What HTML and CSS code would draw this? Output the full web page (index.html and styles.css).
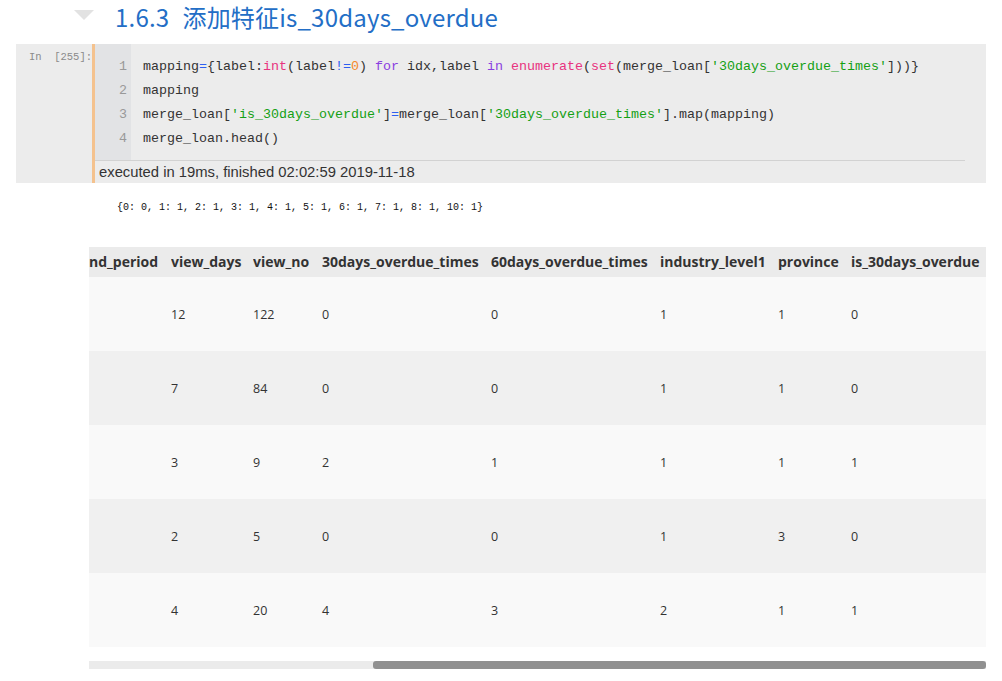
FILE: index.html
```html
<!DOCTYPE html>
<html lang="zh">
<head>
<meta charset="utf-8">
<title>1.6.3 添加特征is_30days_overdue</title>
<link rel="stylesheet" href="styles.css">
</head>
<body>
<div class="page">
  <h2 class="heading"><span class="toggle"></span><span class="htext"><span class="hnum">1.6.3&nbsp;&nbsp;</span><span class="hname">添加特征is_30days_overdue</span></span></h2>

  <div class="cell">
    <div class="prompt">In&nbsp;&nbsp;[255]:</div>
    <div class="inner">
      <div class="editor">
        <div class="gutter"><div>1</div><div>2</div><div>3</div><div>4</div></div>
        <div class="code">
          <div class="ln">mapping<span class="op">=</span>{label:<span class="bi">int</span>(label<span class="op">!=</span><span class="nm">0</span>) <span class="kw">for</span> idx,label <span class="kw">in</span> <span class="bi">enumerate</span>(<span class="bi">set</span>(merge_loan[<span class="st">'30days_overdue_times'</span>]))}</div>
          <div class="ln">mapping</div>
          <div class="ln">merge_loan[<span class="st">'is_30days_overdue'</span>]<span class="op">=</span>merge_loan[<span class="st">'30days_overdue_times'</span>].map(mapping)</div>
          <div class="ln">merge_loan.head()</div>
        </div>
      </div>
      <div class="exec">executed in 19ms, finished 02:02:59 2019-11-18</div>
    </div>
  </div>

  <div class="output">
    <pre class="stream">{0: 0, 1: 1, 2: 1, 3: 1, 4: 1, 5: 1, 6: 1, 7: 1, 8: 1, 10: 1}</pre>
    <div class="table-wrap">
      <table class="df">
        <colgroup>
          <col class="c1"><col class="c2"><col class="c3"><col class="c4"><col class="c5"><col class="c6"><col class="c7"><col class="c8">
        </colgroup>
        <thead>
          <tr><th>nd_period</th><th>view_days</th><th>view_no</th><th>30days_overdue_times</th><th>60days_overdue_times</th><th>industry_level1</th><th>province</th><th>is_30days_overdue</th></tr>
        </thead>
        <tbody>
          <tr><td></td><td>12</td><td>122</td><td>0</td><td>0</td><td>1</td><td>1</td><td>0</td></tr>
          <tr><td></td><td>7</td><td>84</td><td>0</td><td>0</td><td>1</td><td>1</td><td>0</td></tr>
          <tr><td></td><td>3</td><td>9</td><td>2</td><td>1</td><td>1</td><td>1</td><td>1</td></tr>
          <tr><td></td><td>2</td><td>5</td><td>0</td><td>0</td><td>1</td><td>3</td><td>0</td></tr>
          <tr><td></td><td>4</td><td>20</td><td>4</td><td>3</td><td>2</td><td>1</td><td>1</td></tr>
        </tbody>
      </table>
    </div>
    <div class="scrollbar"><div class="thumb"></div></div>
  </div>
</div>
</body>
</html>
```

FILE: styles.css
```css
html, body {
  margin: 0;
  padding: 0;
  background: #ffffff;
}

.page {
  width: 1002px;
  height: 681px;
  overflow: hidden;
  color: #333333;
}

.heading {
  margin: 0;
  height: 44px;
  display: flex;
  align-items: flex-start;
  font-family: "Noto Sans CJK SC", "Noto Sans", sans-serif;
  font-weight: normal;
  font-size: 24px;
  color: #236ec6;
}

.toggle {
  width: 0;
  height: 0;
  margin: 10px 21px 0 74px;
  border-left: 10px solid transparent;
  border-right: 10px solid transparent;
  border-top: 10px solid #e2e2e2;
}

.htext {
  line-height: 34px;
  letter-spacing: 0.2px;
}

.hname {
  padding-left: 2px;
}

.cell {
  margin-left: 16px;
  width: 970px;
  height: 139px;
  background: #ececec;
  display: flex;
}

.prompt {
  width: 76px;
  flex: none;
  box-sizing: border-box;
  padding-top: 7px;
  text-align: right;
  font-family: "Liberation Mono", monospace;
  font-size: 10.5px;
  color: #8a8a8a;
  white-space: nowrap;
}

.inner {
  flex: 1;
  border-left: 3px solid #f4c28e;
  display: flex;
  flex-direction: column;
}

.editor {
  display: flex;
  height: 117px;
  margin-right: 21px;
  border-bottom: 1px solid #d2d2d2;
  box-sizing: border-box;
}

.gutter {
  width: 36px;
  flex: none;
  background: #e2e3e5;
  box-sizing: border-box;
  padding: 11px 4px 0 0;
  text-align: right;
  font-family: "Liberation Mono", monospace;
  font-size: 13.33px;
  line-height: 24px;
  color: #999999;
}

.code {
  flex: 1;
  padding: 11px 0 0 12px;
  font-family: "Liberation Mono", monospace;
  font-size: 13.33px;
  line-height: 24px;
  color: #333333;
}

.ln {
  white-space: pre;
  height: 24px;
}

.op { color: #2e5ff0; }
.bi { color: #e8337e; }
.nm { color: #f48a2a; }
.kw { color: #8a3fe0; }
.st { color: #14a014; }

.exec {
  padding-left: 4px;
  height: 22px;
  line-height: 23px;
  font-family: "Liberation Sans", Arial, sans-serif;
  font-size: 14.8px;
  color: #333333;
}

.output {
  padding-left: 89px;
  padding-top: 18px;
}

.stream {
  margin: 0 0 0 28px;
  height: 46px;
  font-family: "Liberation Mono", monospace;
  font-size: 10px;
  line-height: 13px;
  color: #111111;
}

.table-wrap {
  width: 897px;
  overflow: hidden;
}

.df {
  table-layout: fixed;
  width: 897px;
  border-collapse: collapse;
  border-spacing: 0;
  font-family: "Open Sans", "Noto Sans", sans-serif;
  color: #333333;
}

.c1 { width: 82px; }
.c2 { width: 82px; }
.c3 { width: 69px; }
.c4 { width: 169px; }
.c5 { width: 169px; }
.c6 { width: 118px; }
.c7 { width: 73px; }
.c8 { width: 135px; }

.df th {
  height: 30px;
  padding: 0;
  text-align: left;
  font-size: 14px;
  line-height: 28px;
  font-weight: bold;
  white-space: nowrap;
  overflow: hidden;
  background: #ebebeb;
}

.df td {
  height: 74px;
  padding: 0;
  text-align: left;
  font-size: 12.5px;
  white-space: nowrap;
}

.df tbody tr:nth-child(odd) { background: #f9f9f9; }
.df tbody tr:nth-child(even) { background: #f0f0f0; }

.scrollbar {
  margin-top: 14px;
  width: 897px;
  height: 8px;
  background: #ebebeb;
  display: flex;
  justify-content: flex-end;
}

.thumb {
  width: 613px;
  height: 8px;
  background: #909090;
  border-radius: 3px;
}
```
